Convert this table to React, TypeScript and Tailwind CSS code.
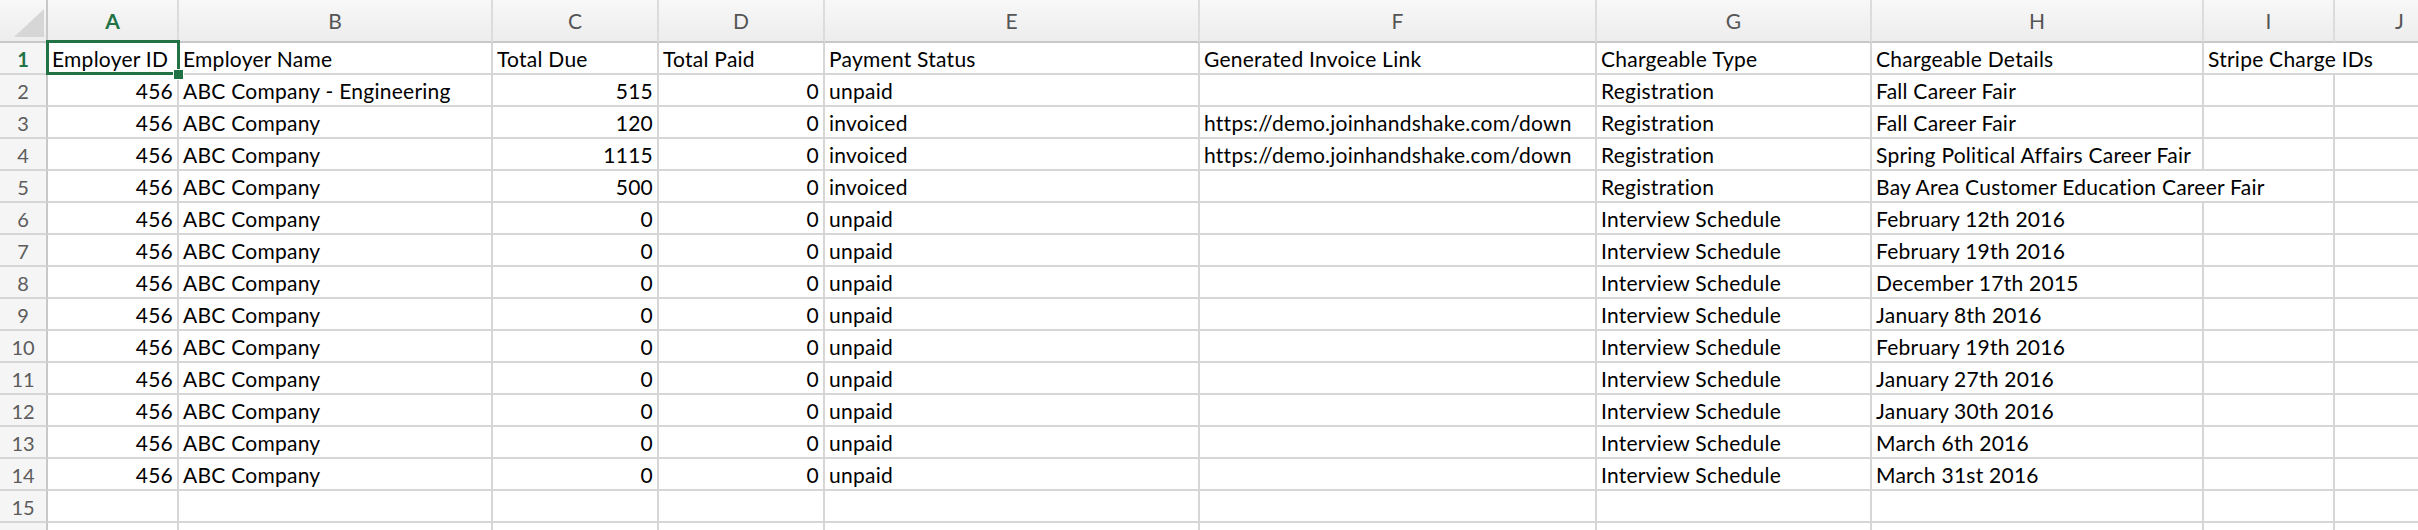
import React from 'react'

const COLS = ['A', 'B', 'C', 'D', 'E', 'F', 'G', 'H', 'I', 'J']
// the column is too narrow for the whole link, so only its visible part is kept
const LINK = 'https://demo.joinhandshake.com/down'

type Row = {
  id: string; name: string; due: string; paid: string; status: string
  link: string; type: string; details: string; spanDetails?: boolean
}

const DATES = [
  'February 12th 2016', 'February 19th 2016', 'December 17th 2015', 'January 8th 2016',
  'February 19th 2016', 'January 27th 2016', 'January 30th 2016', 'March 6th 2016', 'March 31st 2016',
]

const ROWS: Row[] = [
  { id: '456', name: 'ABC Company - Engineering', due: '515', paid: '0', status: 'unpaid', link: '', type: 'Registration', details: 'Fall Career Fair' },
  { id: '456', name: 'ABC Company', due: '120', paid: '0', status: 'invoiced', link: LINK, type: 'Registration', details: 'Fall Career Fair' },
  { id: '456', name: 'ABC Company', due: '1115', paid: '0', status: 'invoiced', link: LINK, type: 'Registration', details: 'Spring Political Affairs Career Fair' },
  { id: '456', name: 'ABC Company', due: '500', paid: '0', status: 'invoiced', link: '', type: 'Registration', details: 'Bay Area Customer Education Career Fair', spanDetails: true },
  ...DATES.map(d => ({ id: '456', name: 'ABC Company', due: '0', paid: '0', status: 'unpaid', link: '', type: 'Interview Schedule', details: d })),
]

const grid = 'grid grid-cols-[48px_131px_314px_166px_166px_375px_397px_275px_332px_131px_131px]'
const cell = 'h-[32px] border-r-2 border-b-2 border-[#d6d6d6] px-[4px] leading-[32px] whitespace-nowrap overflow-hidden bg-white text-[21px] tracking-[0.25px]'

function RowNum({ n, active }: { n?: number; active?: boolean }) {
  return (
    <div className={`h-[32px] border-r-2 border-b-2 border-r-[#c8c8c8] border-b-[#d6d6d6] bg-[#f5f5f5] text-center leading-[32px] text-[20px] ${active ? 'text-[#217346] font-bold' : 'text-[#5c5c5c]'}`}>
      {n}
    </div>
  )
}

const L = ({ children, span }: { children?: React.ReactNode; span?: boolean }) => (
  <div className={`${cell} text-left ${span ? 'col-span-2' : ''}`}>{children}</div>
)
const R = ({ children }: { children?: React.ReactNode }) => (
  <div className={`${cell} text-right`}>{children}</div>
)

export default function App() {
  return (
    <div className="w-[2418px] h-[530px] overflow-hidden bg-white text-black text-[20px] font-['Lato',sans-serif]">

      {/* column letters */}
      <div className={`${grid} h-[43px] bg-linear-to-b from-[#f8f8f8] to-[#ececec]`}>
        <div className="relative h-[43px] border-r-2 border-b-2 border-r-[#c8c8c8] border-b-[#c8c8c8]">
          <div className="absolute left-[14px] top-[9px] w-[30px] h-[28px] bg-[#d6d6d6] [clip-path:polygon(100%_0,100%_100%,0_100%)]" />
        </div>
        {COLS.map(c => (
          <div key={c}
            className={`h-[43px] border-r-2 border-r-[#dcdcdc] border-b-2 border-b-[#c8c8c8] text-center leading-[42px] text-[21px] ${c === 'A' ? 'text-[#217346] font-bold' : 'text-[#555]'}`}>
            {c}
          </div>
        ))}
      </div>

      {/* header row */}
      <div className={grid}>
        <RowNum n={1} active />
        <div className={`${cell} relative overflow-visible`}>
          Employer ID
          <div className="absolute -left-[2px] -top-[3px] -right-[3px] -bottom-[2px] border-[3px] border-[#217346] pointer-events-none" />
          <div className="absolute left-[125px] top-[26px] w-[11px] h-[11px] bg-[#217346] border border-white" />
        </div>
        <L>Employer Name</L>
        <L>Total Due</L>
        <L>Total Paid</L>
        <L>Payment Status</L>
        <L>Generated Invoice Link</L>
        <L>Chargeable Type</L>
        <L>Chargeable Details</L>
        <L span>Stripe Charge IDs</L>
      </div>

      {ROWS.map((r, i) => (
        <div key={i} className={grid}>
          <RowNum n={i + 2} />
          <R>{r.id}</R>
          <L>{r.name}</L>
          <R>{r.due}</R>
          <R>{r.paid}</R>
          <L>{r.status}</L>
          <L>{r.link}</L>
          <L>{r.type}</L>
          <L span={r.spanDetails}>{r.details}</L>
          {!r.spanDetails && <L />}
          <L />
        </div>
      ))}

      {[15, undefined].map((n, i) => (
        <div key={i} className={grid}>
          <RowNum n={n} />
          {COLS.map(c => <L key={c} />)}
        </div>
      ))}
    </div>
  )
}
